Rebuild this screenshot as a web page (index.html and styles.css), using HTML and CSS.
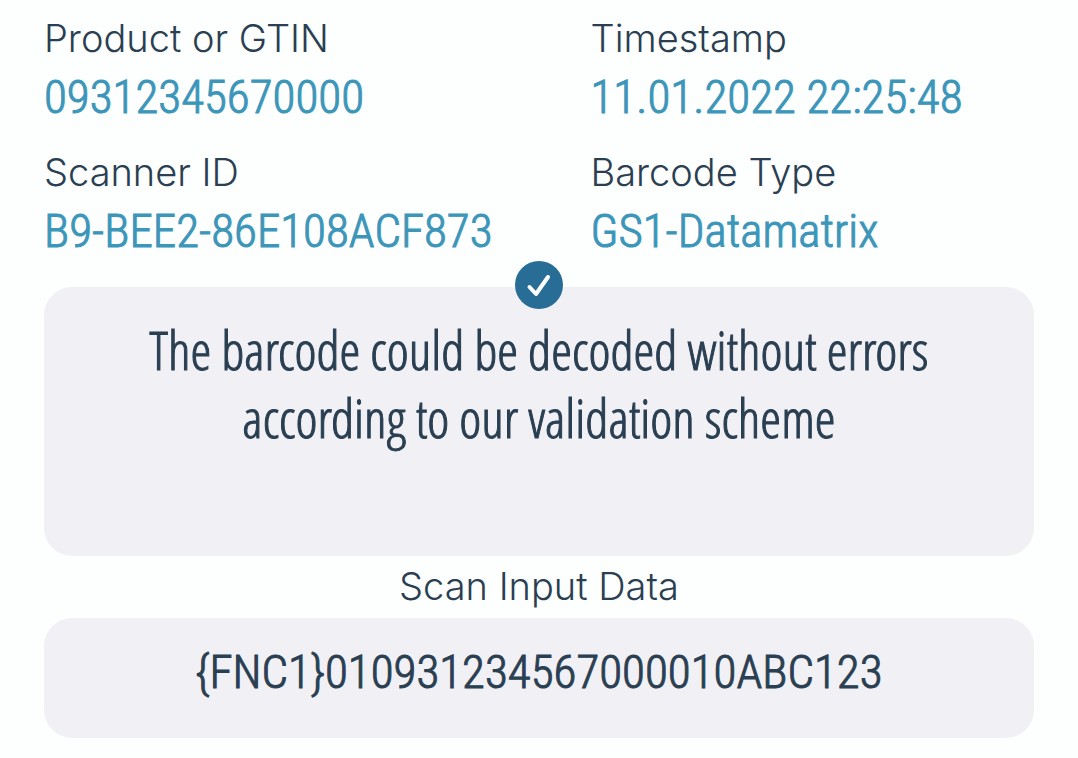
FILE: index.html
```html
<!DOCTYPE html>
<html lang="en">
<head>
  <meta charset="UTF-8">
  <meta name="viewport" content="width=device-width, initial-scale=1">
  <title>Scan Result</title>
  <link rel="stylesheet" href="styles.css">
</head>
<body>
  <main class="scan">
    <dl class="details">
      <div>
        <dt class="label">Product or GTIN</dt>
        <dd class="value">09312345670000</dd>
      </div>
      <div>
        <dt class="label">Timestamp</dt>
        <dd class="value">11.01.2022 22:25:48</dd>
      </div>
      <div>
        <dt class="label">Scanner ID</dt>
        <dd class="value">B9-BEE2-86E108ACF873</dd>
      </div>
      <div>
        <dt class="label">Barcode Type</dt>
        <dd class="value">GS1-Datamatrix</dd>
      </div>
    </dl>

    <section class="card result">
      <svg class="badge" viewBox="0 0 48 48" aria-hidden="true">
        <circle cx="24" cy="24" r="24" fill="#276d95"/>
        <path d="M14.5 26 L21 33 L33 16" fill="none" stroke="#fff" stroke-width="4" stroke-linecap="round" stroke-linejoin="round"/>
      </svg>
      <p>The barcode could be decoded without errors<br>according to our validation scheme</p>
    </section>

    <h2 class="label input-title">Scan Input Data</h2>
    <section class="card input-data">
      <p>{FNC1}010931234567000010ABC123</p>
    </section>
  </main>
</body>
</html>
```
FILE: styles.css
```css
* { box-sizing: border-box; }
body { margin: 0; background: #fdfefe; color: #2a3f52; }
p, dl, dd, h2 { margin: 0; }

.scan { padding: 12px 44px 20px; font-family: "Roboto Condensed", "Liberation Sans Narrow", sans-serif; font-size: 47px; font-weight: 300; }

.details { display: grid; grid-template-columns: 55% 1fr; column-gap: 2px; row-gap: 16px; }
.label { font-family: Inter, "Liberation Sans", sans-serif; font-size: 38px; font-weight: 300; line-height: 52px; }
.value { color: #3c96b9; line-height: 66px; white-space: nowrap; }
.value, .card { -webkit-text-stroke: 1px currentColor; }

.card { background: #f1f0f5; border-radius: 28px; text-align: center; }

.result { position: relative; min-height: 269px; margin-top: 23px; padding: 29px 20px; font-family: "Open Sans Condensed Light", "Roboto Condensed", sans-serif; font-size: 53px; line-height: 68px; }
.badge { position: absolute; top: -26px; left: 50%; width: 48px; height: 48px; margin-left: -24px; }

.input-title { padding: 4px 0 6px; text-align: center; }
.input-data { min-height: 120px; padding: 20px; line-height: 68px; }
```
